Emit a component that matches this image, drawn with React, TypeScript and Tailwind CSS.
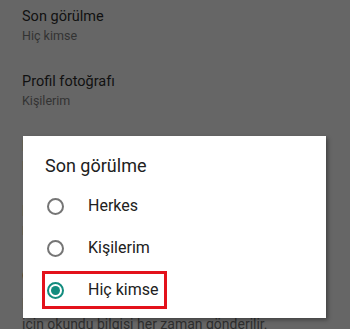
const items = [
  { title: "Son görülme", sub: ["Hiç kimse"] },
  { title: "Profil fotoğrafı", sub: ["Kişilerim"] },
  { title: "Hakkımda", sub: ["Herkes"] },
  { title: "Durum", sub: ["Kişilerim"] },
];

const options = ["Herkes", "Kişilerim", "Hiç kimse"];

const Radio = ({ checked }: { checked: boolean }) =>
  checked ? (
    <span className="w-[17px] h-[17px] rounded-full border-2 border-[#128c7e] flex items-center justify-center">
      <span className="w-[9px] h-[9px] rounded-full bg-[#128c7e]" />
    </span>
  ) : (
    <span className="w-[17px] h-[17px] rounded-full border-2 border-[#757575]" />
  );

export default function App() {
  return (
    <div className="relative w-[350px] h-[329px] overflow-hidden bg-[#666666] font-['Roboto',sans-serif]">
      <div className="flex flex-col px-[22px]">
        {items.map((it) => (
          <div key={it.title} className="pt-[7px] pb-[20px]">
            <div className="text-[14.5px] leading-[20px] text-[#111111] whitespace-nowrap">{it.title}</div>
            {it.sub.map((s) => (
              <div key={s} className="text-[12.5px] leading-[18px] text-[#333333] whitespace-nowrap">
                {s}
              </div>
            ))}
          </div>
        ))}
        <div className="pt-[7px]">
          <div className="text-[14.5px] leading-[20px] text-[#111111] whitespace-nowrap">Okundu bilgisi</div>
          <div className="mt-[7px] text-[14px] leading-[20px] text-[#2e2e2e] whitespace-nowrap">
            Kapatırsanız okundu bilgisi gönderemezsiniz.
          </div>
          <div className="text-[14px] leading-[20px] text-[#2e2e2e] whitespace-nowrap">
            için okundu bilgisi her zaman gönderilir.
          </div>
        </div>
      </div>

      <div className="absolute left-[23px] top-[136px] w-[303px] h-[182px] bg-white shadow-[2px_2px_4px_rgba(0,0,0,0.35)]">
        <div className="pl-[22px] pt-[18px] text-[18px] leading-[24px] text-[#212121]">Son görülme</div>
        <div className="flex flex-col pt-[7px]">
          {options.map((o, i) => (
            <div key={o} className="h-[42px] flex items-center pl-[24px] gap-[24px]">
              <Radio checked={i === 2} />
              <span className="text-[16px] text-[#212121]">{o}</span>
            </div>
          ))}
        </div>
        <div className="absolute left-[19px] top-[135px] w-[125px] h-[38px] border-[3px] border-[#e3121b]" />
      </div>
    </div>
  );
}
